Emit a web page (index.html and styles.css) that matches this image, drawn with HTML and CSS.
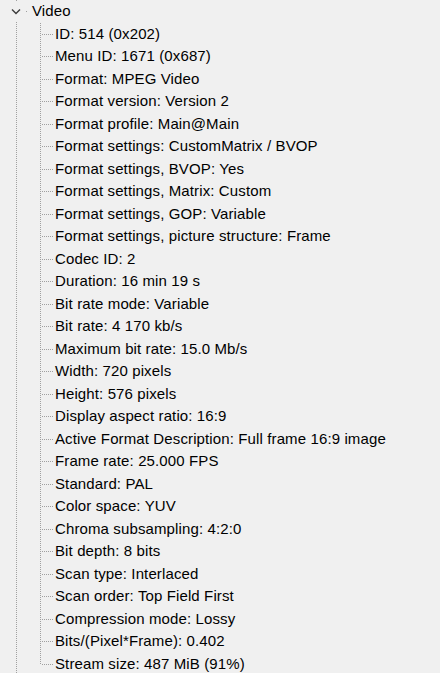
FILE: index.html
```html
<!DOCTYPE html>
<html>
<head>
<meta charset="utf-8">
<link rel="stylesheet" href="styles.css">
</head>
<body>
<div class="tree">
  <div class="node-row">
    <span class="toggle">
      <svg width="10" height="7" viewBox="0 0 10 7"><path d="M1 1.5 L5 5.5 L9 1.5" fill="none" stroke="#3c3c3c" stroke-width="1.4"/></svg>
    </span>
    <span class="stub"></span>
    <span class="label">Video</span>
  </div>
  <ul class="children">
    <li>ID: 514 (0x202)</li>
    <li>Menu ID: 1671 (0x687)</li>
    <li>Format: MPEG Video</li>
    <li>Format version: Version 2</li>
    <li>Format profile: Main@Main</li>
    <li>Format settings: CustomMatrix / BVOP</li>
    <li>Format settings, BVOP: Yes</li>
    <li>Format settings, Matrix: Custom</li>
    <li>Format settings, GOP: Variable</li>
    <li>Format settings, picture structure: Frame</li>
    <li>Codec ID: 2</li>
    <li>Duration: 16 min 19 s</li>
    <li>Bit rate mode: Variable</li>
    <li>Bit rate: 4 170 kb/s</li>
    <li>Maximum bit rate: 15.0 Mb/s</li>
    <li>Width: 720 pixels</li>
    <li>Height: 576 pixels</li>
    <li>Display aspect ratio: 16:9</li>
    <li>Active Format Description: Full frame 16:9 image</li>
    <li>Frame rate: 25.000 FPS</li>
    <li>Standard: PAL</li>
    <li>Color space: YUV</li>
    <li>Chroma subsampling: 4:2:0</li>
    <li>Bit depth: 8 bits</li>
    <li>Scan type: Interlaced</li>
    <li>Scan order: Top Field First</li>
    <li>Compression mode: Lossy</li>
    <li>Bits/(Pixel*Frame): 0.402</li>
    <li>Stream size: 487 MiB (91%)</li>
  </ul>
</div>
</body>
</html>
```
FILE: styles.css
```css
html, body {
  margin: 0;
  padding: 0;
  background: #f0f0f0;
  overflow: hidden;
}
body {
  width: 440px;
  height: 673px;
  font-family: "Liberation Sans", Arial, sans-serif;
  font-size: 15px;
  letter-spacing: 0.12px;
  color: #000;
}
.tree {
  height: 673px;
  background-image: repeating-linear-gradient(to bottom, #a0a0a0 0 1px, transparent 1px 2px);
  background-size: 1px 100%;
  background-repeat: no-repeat;
  background-position: 16px 0;
}
.node-row {
  display: flex;
  align-items: center;
  height: 22.5px;
  line-height: 22.5px;
}
.toggle {
  display: flex;
  align-items: center;
  justify-content: center;
  margin-left: 7px;
  width: 18px;
  height: 19px;
  padding-top: 1px;
  box-sizing: border-box;
  background: #f0f0f0;
}
.toggle svg {
  display: block;
}
.stub {
  width: 1px;
  height: 1px;
  margin-left: 1px;
  margin-top: 1px;
  background: #a0a0a0;
}
.label {
  margin-left: 5px;
}
.children {
  list-style: none;
  margin: 0 0 0 40px;
  padding: 0;
  background-image: repeating-linear-gradient(to bottom, #a0a0a0 0 1px, transparent 1px 2px);
  background-size: 1px calc(100% - 11px);
  background-repeat: no-repeat;
  background-position: 0 0;
}
.children li {
  height: 22.5px;
  line-height: 22.5px;
  padding-left: 15px;
  white-space: nowrap;
  background-image: repeating-linear-gradient(to right, #a0a0a0 0 1px, transparent 1px 2px);
  background-size: 11px 1px;
  background-repeat: no-repeat;
  background-position: 2px 11px;
}
```
